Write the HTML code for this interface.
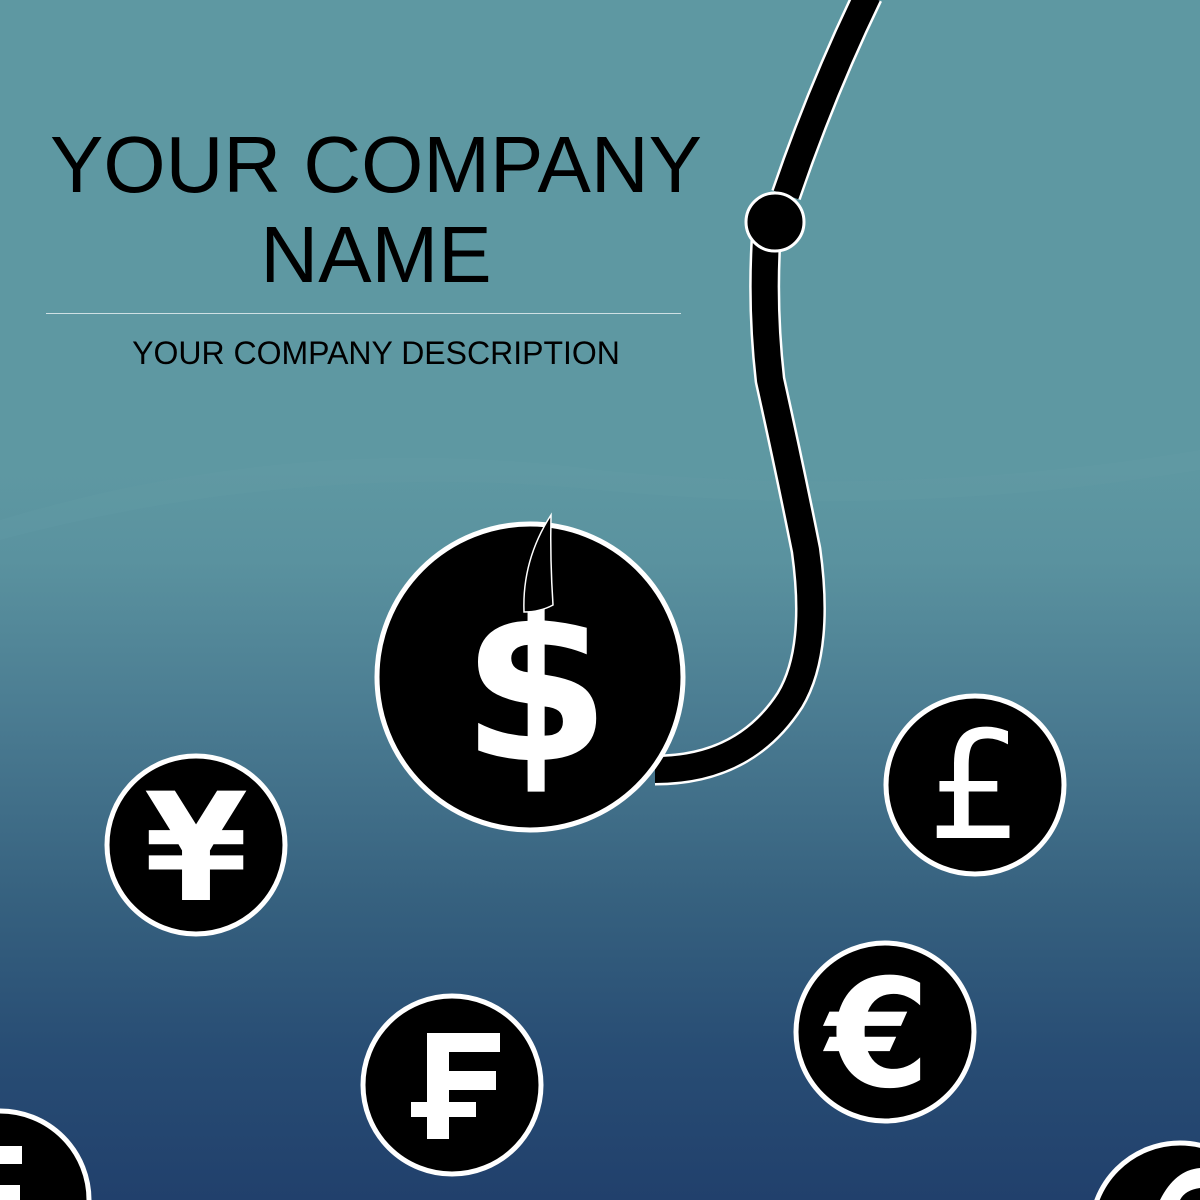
<!DOCTYPE html>
<html style="overflow:hidden"><head><style>
html,body{margin:0;padding:0;width:1200px;height:1200px;overflow:hidden}
body{position:relative;font-family:"Liberation Sans",sans-serif;
background:linear-gradient(to bottom,#5e98a2 0px,#5e98a2 470px,#5a929f 560px,#4a7b91 720px,#36617f 900px,#284d74 1050px,#21406c 1200px);}
.t{position:absolute;left:0;width:752px;text-align:center;color:#000}
svg{display:block}
</style></head><body>
<svg width="1200" height="1200" style="position:absolute;left:0;top:0">
<path d="M0,520 Q300,430 600,470 Q900,500 1200,450 L1200,470 Q900,520 600,490 Q300,460 0,540Z" fill="#6aa2ab" opacity="0.2"/>
<g fill="none" stroke-linecap="butt" stroke-linejoin="round">
<path d="M868,-5 Q822,90 786,195 M766,240 Q762,310 770,380 Q790,470 806,550 Q820,650 790,700 Q745,770 655,770" stroke="#fff" stroke-width="31"/>
<path d="M868,-5 Q822,90 786,195 M766,240 Q762,310 770,380 Q790,470 806,550 Q820,650 790,700 Q745,770 655,770" stroke="#000" stroke-width="26"/>
</g>
<circle cx="775" cy="222" r="29" fill="#000" stroke="#fff" stroke-width="3"/>
<g stroke="#fff" stroke-width="5" fill="#000">
<circle cx="530" cy="677" r="153"/>
<circle cx="196" cy="845" r="89"/>
<circle cx="975" cy="785" r="89"/>
<circle cx="885" cy="1032" r="89"/>
<circle cx="452" cy="1085" r="89"/>
<circle cx="0" cy="1200" r="89"/>
<circle cx="1180" cy="1232" r="89"/>
</g>
<text x="536" y="760" font-family="DejaVu Sans" font-weight="bold" font-size="215" fill="#fff" text-anchor="middle">$</text>
<path d="M524,612 Q522,560 551,515 Q550,560 553,605 Q540,612 524,612Z" fill="#000" stroke="#fff" stroke-width="1.5"/>
<text x="196" y="900" font-family="DejaVu Sans" font-weight="bold" font-size="150" fill="#fff" text-anchor="middle">¥</text>
<text x="975" y="838" font-family="DejaVu Sans" font-size="150" fill="#fff" text-anchor="middle">£</text>
<text x="878" y="1086" font-family="DejaVu Sans" font-weight="bold" font-size="150" fill="#fff" text-anchor="middle">€</text>
<g fill="#fff">
<rect x="427" y="1033" width="22" height="106"/><rect x="427" y="1033" width="73" height="19"/><rect x="427" y="1071" width="69" height="19"/><rect x="411" y="1102" width="65" height="15"/>
<rect x="0" y="1146" width="22" height="18"/><rect x="0" y="1185" width="20" height="15"/>
</g>
<path d="M1160,1200 Q1175,1170 1200,1168 L1200,1188 Q1185,1190 1180,1200Z" fill="#fff"/>
<line x1="46" y1="313.5" x2="681" y2="313.5" stroke="#cfe0e4" stroke-width="1"/>
</svg>
<div class="t" style="top:120px;font-size:80px;line-height:90px">YOUR COMPANY<br>NAME</div>
<div class="t" style="top:334px;font-size:32px;line-height:38px">YOUR COMPANY DESCRIPTION</div>
</body></html>
